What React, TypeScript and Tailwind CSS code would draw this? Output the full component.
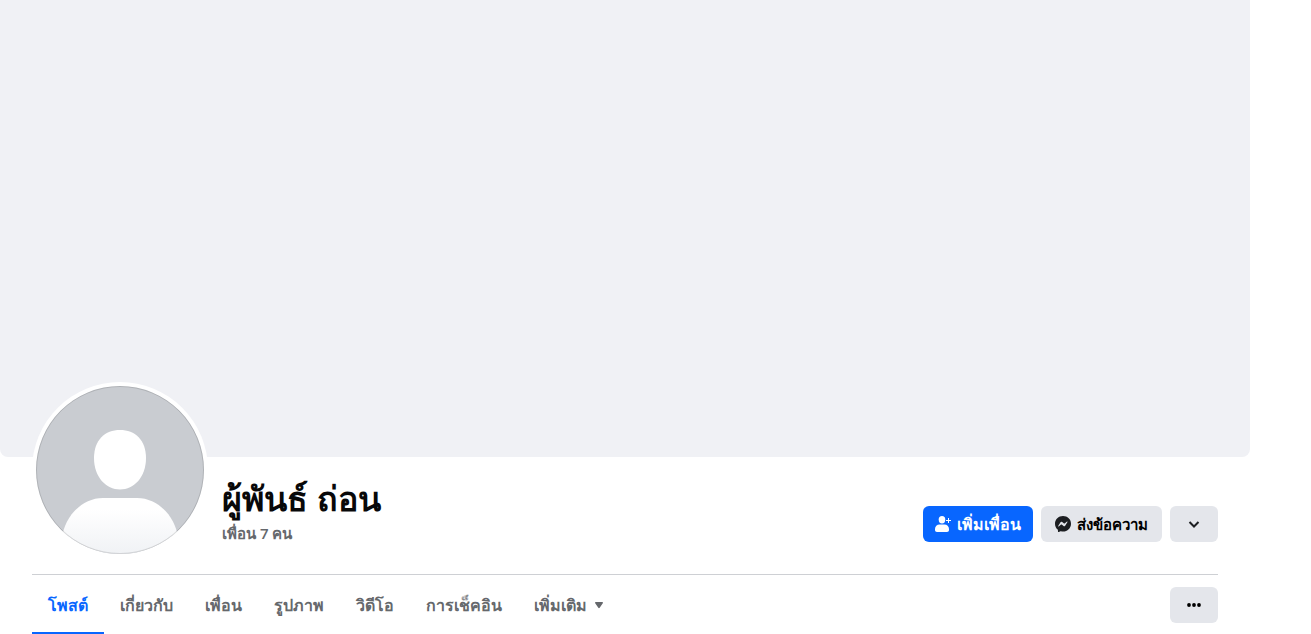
import type { ReactNode } from "react";

const tabs = [
  { label: "โพสต์", href: "#posts" },
  { label: "เกี่ยวกับ", href: "#about" },
  { label: "เพื่อน", href: "#friends" },
  { label: "รูปภาพ", href: "#photos" },
  { label: "วิดีโอ", href: "#videos" },
  { label: "การเช็คอิน", href: "#checkins" },
];

function Avatar() {
  return (
    <svg viewBox="0 0 168 168" className="block size-full" role="img" aria-label="ผู้พันธ์ ถ่อน">
      <defs>
        <clipPath id="avatar-clip">
          <circle cx="84" cy="84" r="84" />
        </clipPath>
        <linearGradient id="avatar-body" x1="0" y1="0" x2="0" y2="1">
          <stop offset="0.2" stopColor="#ffffff" />
          <stop offset="1" stopColor="#f0f2f5" />
        </linearGradient>
      </defs>
      <g clipPath="url(#avatar-clip)">
        <rect width="168" height="168" fill="#c9ccd1" />
        <path
          d="M84 44C99 44 110 54 110 72C110 91 98 103.500 84 103.500C70 103.500 58 91 58 72C58 54 69 44 84 44Z"
          fill="#ffffff"
        />
        <path d="M26 152C28 132 45 112 67 112H101C123 112 140 132 142 152V168H26Z" fill="url(#avatar-body)" />
      </g>
      <circle cx="84" cy="84" r="83.500" fill="none" stroke="#000000" strokeOpacity="0.13" />
    </svg>
  );
}

function AddFriendIcon() {
  return (
    <svg viewBox="0 0 16 16" className="size-4 shrink-0" fill="currentColor" aria-hidden="true">
      <ellipse cx="7" cy="3.700" rx="3.300" ry="3.700" />
      <path d="M4.500 8.500h5A4.500 4.500 0 0 1 14 13v1c0 1.300-.8 2-2 2H2c-1.200 0-2-.7-2-2v-1a4.500 4.500 0 0 1 4.500-4.500Z" />
      <path d="M13 2h1v2h2v1h-2v2h-1V5h-2V4h2Z" />
    </svg>
  );
}

function MessengerIcon() {
  return (
    <svg viewBox="0 0 16 16" className="size-4 shrink-0" aria-hidden="true">
      <path
        d="M8 0C3.500 0 0 3.300 0 7.700c0 2.400 1 4.400 2.600 5.800.2.200.3.300.3.500l.1 1.400c0 .5.500.7.900.6l1.600-.7h.5c.6.200 1.300.2 2 .2 4.500 0 8-3.300 8-7.800S12.500 0 8 0Z"
        fill="#1c1e21"
      />
      <path
        d="m3.200 10 2.300-3.700c.4-.6 1.200-.7 1.700-.3L9 7.400c.2.100.4.100.6 0L12 5.500c.3-.2.700.1.500.5l-2.300 3.700c-.4.600-1.200.7-1.700.3L6.700 8.600a.5.5 0 0 0-.6 0l-2.400 1.900c-.3.200-.7-.1-.5-.5Z"
        fill="#e4e6eb"
      />
    </svg>
  );
}

function GrayButton({ label, children, className = "" }: { label?: string; children: ReactNode; className?: string }) {
  return (
    <button
      type="button"
      aria-label={label}
      className={`flex h-9 items-center justify-center gap-1.5 rounded-md bg-[#e4e6eb] text-black ${className}`}
    >
      {children}
    </button>
  );
}

export default function App() {
  return (
    <main className="max-w-[1250px] bg-white font-['Open_Sans','Liberation_Sans',sans-serif] text-base leading-5">
      <div className="h-[457px] rounded-b-lg bg-[#f0f1f5]" />

      <div className="px-8">
        <header className="flex h-[117px] items-start">
          <div className="relative -mt-[75px] size-44 shrink-0 rounded-full bg-white p-1">
            <Avatar />
          </div>
          <div className="ml-3.5 mt-6 flex-1">
            <h1 className="text-[34px] font-bold leading-[34px] text-[#080809]">ผู้พันธ์ ถ่อน</h1>
            <a href="#friends" className="mt-2 block text-[15px] font-semibold leading-5 text-[#65686c]">
              เพื่อน 7 คน
            </a>
          </div>
          <div className="mt-[49px] flex gap-2 font-semibold">
            <button
              type="button"
              className="flex h-9 items-center justify-center gap-1.5 rounded-md bg-[#0866ff] px-3 text-white"
            >
              <AddFriendIcon />
              เพิ่มเพื่อน
            </button>
            <GrayButton className="min-w-[121px] px-3 text-[15px]">
              <MessengerIcon />
              ส่งข้อความ
            </GrayButton>
            <GrayButton label="ตัวเลือก" className="w-12">
              <svg viewBox="0 0 16 16" className="size-4" fill="none" stroke="#1c1e21" strokeWidth="2" aria-hidden="true">
                <path d="m3.500 6 4.500 4.500L12.500 6" />
              </svg>
            </GrayButton>
          </div>
        </header>

        <div className="flex items-start justify-between border-t border-[#ced0d4]">
          <nav className="flex font-semibold text-[#65686c]">
            {tabs.map((tab, i) => (
              <a
                key={tab.href}
                href={tab.href}
                aria-current={i === 0 ? "page" : undefined}
                className={`flex h-[59px] flex-col px-4 pt-5 ${
                  i === 0 ? "border-b-2 border-[#0866ff] text-[#0866ff]" : ""
                }`}
              >
                {tab.label}
              </a>
            ))}
            <button type="button" className="flex h-[59px] items-start gap-2 px-4 pt-5">
              เพิ่มเติม
              <svg viewBox="0 0 8 20" className="h-5 w-2" fill="currentColor" aria-hidden="true">
                <path d="M.8 7h6.400c.8 0 1 .7.600 1.200L4.700 12.800c-.4.500-1 .5-1.400 0L.2 8.200C-.2 7.700 0 7 .8 7Z" />
              </svg>
            </button>
          </nav>
          <GrayButton label="เพิ่มเติม" className="mt-3 w-12">
            <svg viewBox="0 0 16 16" className="size-4" fill="currentColor" aria-hidden="true">
              <circle cx="3" cy="8" r="1.900" />
              <circle cx="8" cy="8" r="1.900" />
              <circle cx="13" cy="8" r="1.900" />
            </svg>
          </GrayButton>
        </div>
      </div>
    </main>
  );
}
